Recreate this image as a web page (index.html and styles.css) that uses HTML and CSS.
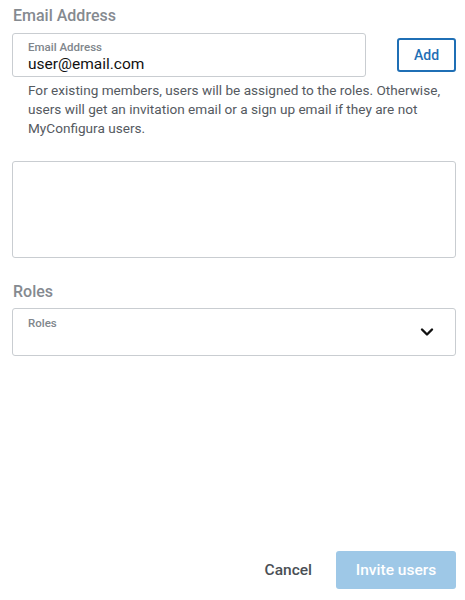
FILE: index.html
```html
<!DOCTYPE html>
<html>
<head>
<meta charset="utf-8">
<link rel="stylesheet" href="styles.css">
</head>
<body>
<div class="dialog">
  <div class="section-title">Email Address</div>
  <div class="email-row">
    <div class="field email-field">
      <div class="field-label">Email Address</div>
      <div class="field-value">user@email.com</div>
    </div>
    <button class="btn-outline">Add</button>
  </div>
  <p class="help">For existing members, users will be assigned to the roles. Otherwise, users will get an invitation email or a sign up email if they are not MyConfigura users.</p>
  <div class="list-box"></div>
  <div class="section-title roles-title">Roles</div>
  <div class="field select-field">
    <div class="field-label">Roles</div>
    <svg class="chevron" width="14" height="10" viewBox="0 0 14 10"><path d="M2 2.5 L7 7.5 L12 2.5" fill="none" stroke="#111" stroke-width="2.4" stroke-linecap="round" stroke-linejoin="round"/></svg>
  </div>
  <div class="footer">
    <button class="btn-text">Cancel</button>
    <button class="btn-primary">Invite users</button>
  </div>
</div>
</body>
</html>
```
FILE: styles.css
```css
html, body {
  margin: 0;
  padding: 0;
  background: #fff;
}
body {
  font-family: Roboto, "Liberation Sans", sans-serif;
  color: #333;
}
.dialog {
  box-sizing: border-box;
  height: 600px;
  padding: 6px 9px 11px 12px;
  display: flex;
  flex-direction: column;
}
.section-title {
  font-size: 16px;
  font-weight: 500;
  color: #858a90;
  line-height: 20px;
  padding-left: 1px;
}
.email-row {
  display: flex;
  align-items: center;
  gap: 31px;
  margin-top: 7px;
}
.field {
  box-sizing: border-box;
  border: 1px solid #c9cdd1;
  border-radius: 3px;
  padding: 7px 15px 0;
  background: #fff;
}
.email-field {
  flex: 1;
  height: 44px;
}
.field-label {
  font-size: 11.5px;
  font-weight: 500;
  color: #80868c;
  line-height: 13px;
}
.field-value {
  font-size: 15.5px;
  color: #111;
  line-height: 19px;
  margin-top: 1px;
}
.btn-outline {
  box-sizing: border-box;
  width: 59px;
  height: 34px;
  border: 2px solid #1f6fb5;
  border-radius: 3px;
  background: #fff;
  color: #1f6fb5;
  font-family: Roboto, "Liberation Sans", sans-serif;
  font-size: 14px;
  font-weight: 500;
  padding: 0;
}
.help {
  margin: 4px 0 0 16px;
  font-size: 13.6px;
  line-height: 19px;
  color: #555a5f;
}
.list-box {
  box-sizing: border-box;
  height: 97px;
  border: 1px solid #c9cdd1;
  border-radius: 3px;
  margin-top: 23px;
}
.roles-title {
  margin-top: 24px;
}
.select-field {
  position: relative;
  height: 48px;
  margin-top: 6px;
  padding-top: 8px;
}
.chevron {
  position: absolute;
  right: 21px;
  top: 18px;
}
.footer {
  margin-top: auto;
  display: flex;
  justify-content: flex-end;
  align-items: center;
  gap: 24px;
}
.btn-text {
  background: none;
  border: none;
  font-family: Roboto, "Liberation Sans", sans-serif;
  font-size: 15.5px;
  font-weight: 500;
  color: #4a4f54;
  padding: 0;
}
.btn-primary {
  box-sizing: border-box;
  width: 120px;
  height: 38px;
  border: none;
  border-radius: 3px;
  background: #9ec8e7;
  color: #fff;
  font-family: Roboto, "Liberation Sans", sans-serif;
  font-size: 15.5px;
  font-weight: 500;
  padding: 0;
}
```
